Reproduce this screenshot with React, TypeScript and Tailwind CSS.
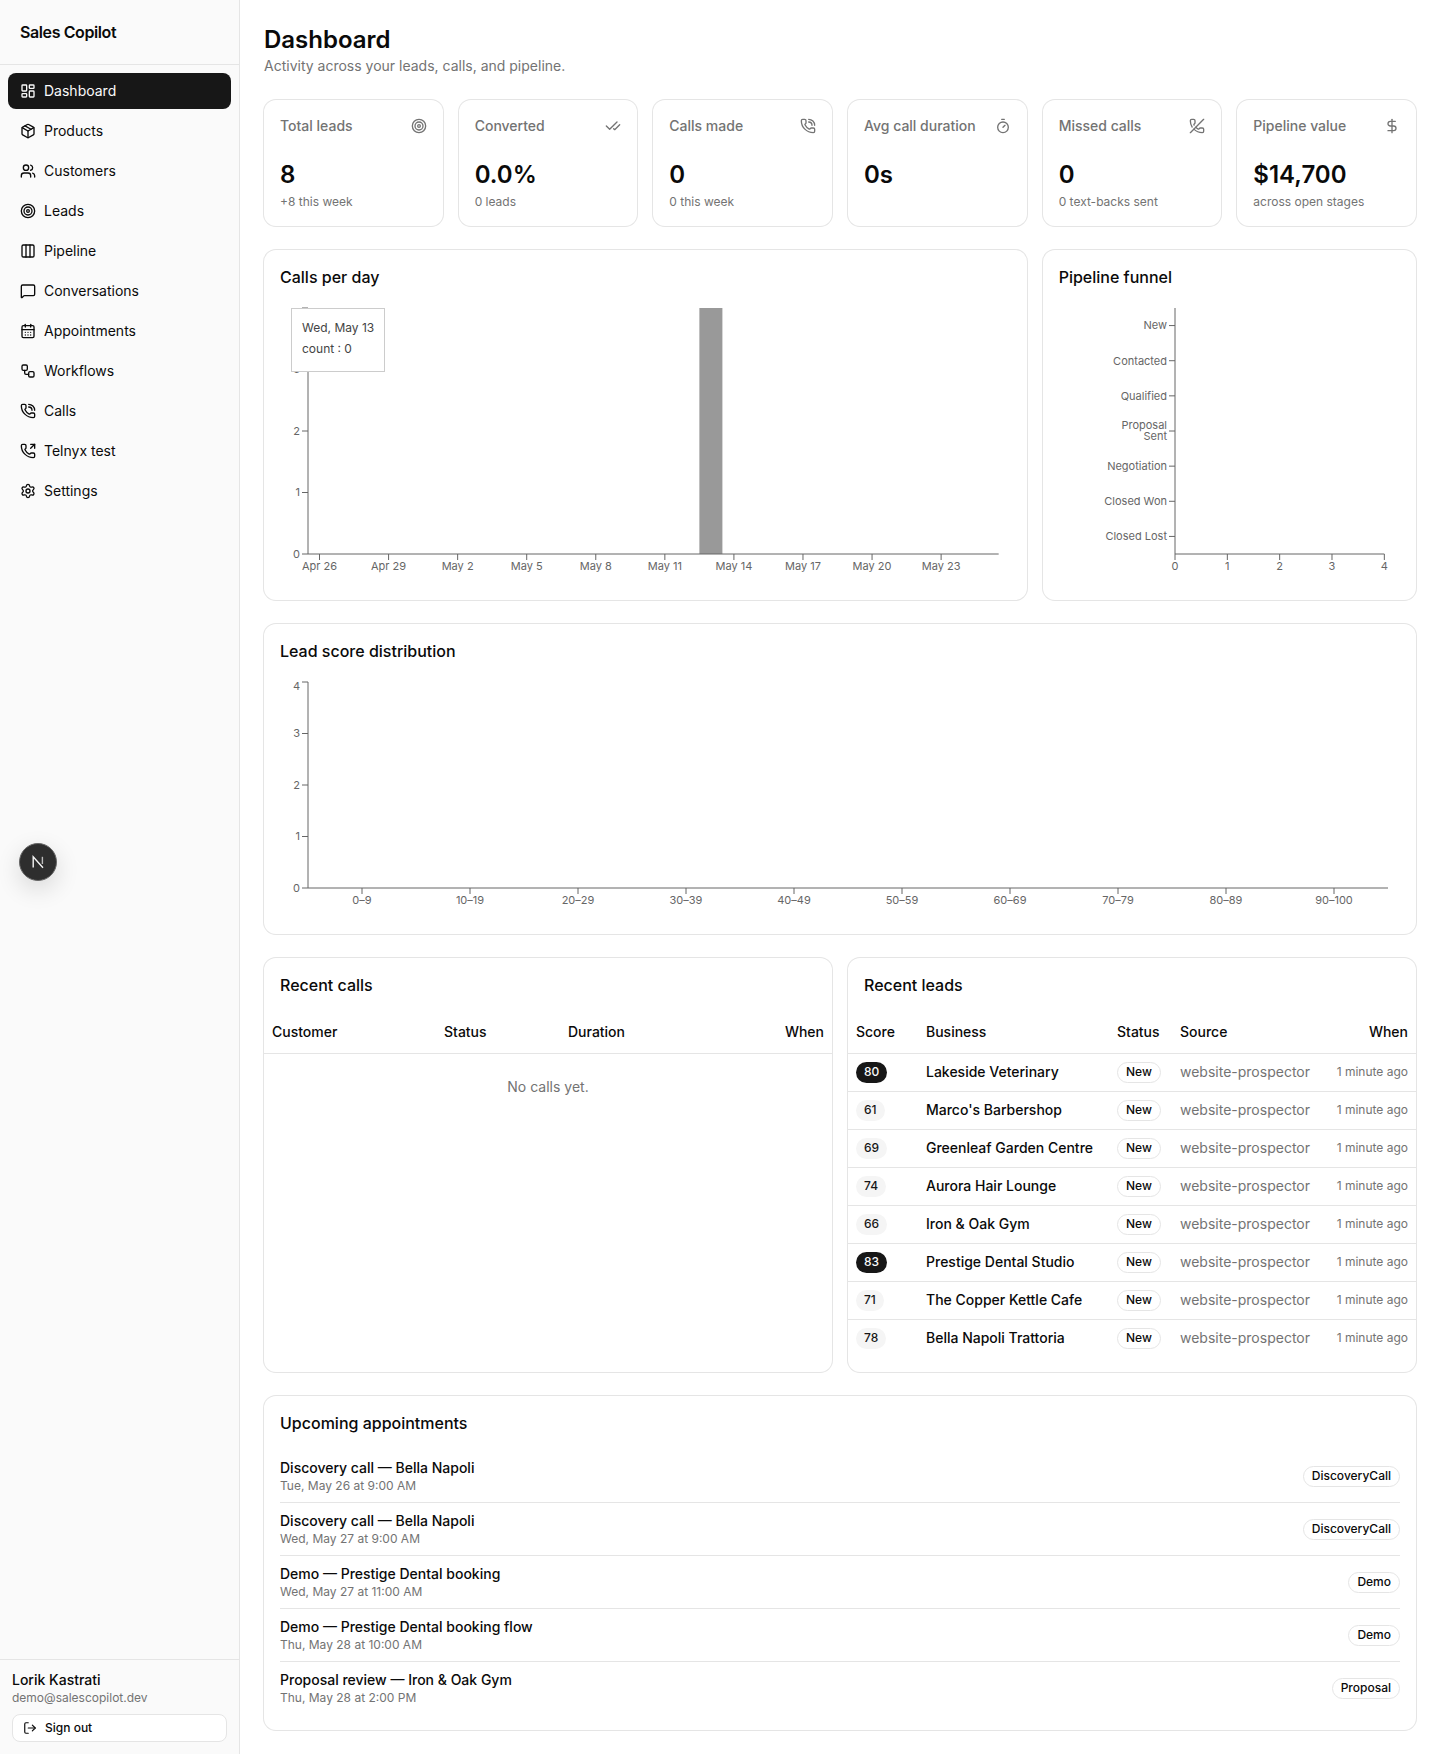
import {
  CalendarDays,
  CheckCheck,
  Columns3,
  DollarSign,
  LayoutDashboard,
  LogOut,
  MessageSquare,
  Package,
  PhoneCall,
  PhoneOff,
  PhoneOutgoing,
  Settings,
  Target,
  Timer,
  Users,
  Workflow,
} from "lucide-react";

const navItems = [
  { name: "Dashboard", icon: LayoutDashboard, active: true },
  { name: "Products", icon: Package },
  { name: "Customers", icon: Users },
  { name: "Leads", icon: Target },
  { name: "Pipeline", icon: Columns3 },
  { name: "Conversations", icon: MessageSquare },
  { name: "Appointments", icon: CalendarDays },
  { name: "Workflows", icon: Workflow },
  { name: "Calls", icon: PhoneCall },
  { name: "Telnyx test", icon: PhoneOutgoing },
  { name: "Settings", icon: Settings },
];

const metrics = [
  { label: "Total leads", value: "8", sub: "+8 this week", icon: Target },
  { label: "Converted", value: "0.0%", sub: "0 leads", icon: CheckCheck },
  { label: "Calls made", value: "0", sub: "0 this week", icon: PhoneCall },
  { label: "Avg call duration", value: "0s", sub: "", icon: Timer },
  { label: "Missed calls", value: "0", sub: "0 text-backs sent", icon: PhoneOff },
  { label: "Pipeline value", value: "$14,700", sub: "across open stages", icon: DollarSign },
];

const leads = [
  { score: 80, name: "Lakeside Veterinary" },
  { score: 61, name: "Marco's Barbershop" },
  { score: 69, name: "Greenleaf Garden Centre" },
  { score: 74, name: "Aurora Hair Lounge" },
  { score: 66, name: "Iron & Oak Gym" },
  { score: 83, name: "Prestige Dental Studio" },
  { score: 71, name: "The Copper Kettle Cafe" },
  { score: 78, name: "Bella Napoli Trattoria" },
];

const appointments = [
  { title: "Discovery call — Bella Napoli", when: "Tue, May 26 at 9:00 AM", type: "DiscoveryCall" },
  { title: "Discovery call — Bella Napoli", when: "Wed, May 27 at 9:00 AM", type: "DiscoveryCall" },
  { title: "Demo — Prestige Dental booking", when: "Wed, May 27 at 11:00 AM", type: "Demo" },
  { title: "Demo — Prestige Dental booking flow", when: "Thu, May 28 at 10:00 AM", type: "Demo" },
  { title: "Proposal review — Iron & Oak Gym", when: "Thu, May 28 at 2:00 PM", type: "Proposal" },
];

const dayLabels = ["Apr 26", "Apr 29", "May 2", "May 5", "May 8", "May 11", "May 14", "May 17", "May 20", "May 23"];
const stages = ["New", "Contacted", "Qualified", "Proposal Sent", "Negotiation", "Closed Won", "Closed Lost"];
const buckets = ["0–9", "10–19", "20–29", "30–39", "40–49", "50–59", "60–69", "70–79", "80–89", "90–100"];

const AXIS = "#666";

function Tick({ x1, y1, x2, y2 }: { x1: number; y1: number; x2: number; y2: number }) {
  return <line x1={x1} y1={y1} x2={x2} y2={y2} stroke={AXIS} />;
}

function CountAxis({ bottom, top, firstDy }: { bottom: number; top: number; firstDy: number }) {
  return (
    <>
      <line x1={28} y1={top} x2={28} y2={bottom} stroke={AXIS} />
      {[0, 1, 2, 3, 4].map((n) => {
        const y = bottom - ((bottom - top) * n) / 4;
        return (
          <g key={n}>
            <Tick x1={22} y1={y} x2={28} y2={y} />
            <text x={20} y={y + (n === 4 ? firstDy : 0)} dy="0.355em" textAnchor="end" fontSize={11} fill={AXIS}>
              {n}
            </text>
          </g>
        );
      })}
    </>
  );
}

function CallsChart() {
  const band = 690.67 / 30;
  return (
    <svg className="block w-full h-[280px] overflow-visible">
      <rect x={28 + band * 17} y={4} width={band} height={246} fill="#999" />
      <CountAxis top={4} bottom={250} firstDy={4} />
      <line x1={28} y1={250} x2={718.67} y2={250} stroke={AXIS} />
      {dayLabels.map((label, i) => {
        const x = 28 + band * (i * 3 + 0.5);
        return (
          <g key={label}>
            <Tick x1={x} y1={250} x2={x} y2={256} />
            <text x={x} y={258} dy="0.71em" textAnchor="middle" fontSize={11} fill={AXIS}>
              {label}
            </text>
          </g>
        );
      })}
    </svg>
  );
}

function FunnelChart() {
  const left = 116;
  const right = 325.33;
  const band = 246 / 7;
  return (
    <svg className="block w-full h-[280px] overflow-visible">
      <line x1={left} y1={4} x2={left} y2={250} stroke={AXIS} />
      <line x1={left} y1={250} x2={right} y2={250} stroke={AXIS} />
      {stages.map((stage, i) => {
        const y = 4 + band * (i + 0.5);
        return (
          <g key={stage}>
            <Tick x1={left - 6} y1={y} x2={left} y2={y} />
            {stage === "Proposal Sent" ? (
              <text textAnchor="end" fontSize={11} fill={AXIS}>
                <tspan x={left - 8} y={y - 6} dy="0.355em">Proposal</tspan>
                <tspan x={left - 8} y={y + 5} dy="0.355em">Sent</tspan>
              </text>
            ) : (
              <text x={left - 8} y={y} dy="0.355em" textAnchor="end" fontSize={11} fill={AXIS}>
                {stage}
              </text>
            )}
          </g>
        );
      })}
      {[0, 1, 2, 3, 4].map((n) => {
        const x = left + ((right - left) * n) / 4;
        return (
          <g key={n}>
            <Tick x1={x} y1={250} x2={x} y2={256} />
            <text x={x} y={258} dy="0.71em" textAnchor="middle" fontSize={11} fill={AXIS}>
              {n}
            </text>
          </g>
        );
      })}
    </svg>
  );
}

function ScoreChart() {
  return (
    <svg className="block w-full h-[240px] overflow-visible">
      <CountAxis top={4} bottom={210} firstDy={4} />
      <line x1={28} y1={210} x2={1108} y2={210} stroke={AXIS} />
      {buckets.map((label, i) => {
        const x = 28 + 108 * (i + 0.5);
        return (
          <g key={label}>
            <Tick x1={x} y1={210} x2={x} y2={216} />
            <text x={x} y={218} dy="0.71em" textAnchor="middle" fontSize={11} fill={AXIS}>
              {label}
            </text>
          </g>
        );
      })}
    </svg>
  );
}

function Card({ className = "", children }: { className?: string; children: React.ReactNode }) {
  return <div className={`rounded-xl bg-white ring-1 ring-[#e5e5e5] ${className}`}>{children}</div>;
}

function CardTitle({ children }: { children: React.ReactNode }) {
  return <h2 className="text-base leading-[22px] font-medium text-[#0a0a0a]">{children}</h2>;
}

function Badge({ children }: { children: React.ReactNode }) {
  return (
    <span className="inline-flex h-[21px] items-center rounded-full border border-[#e5e5e5] bg-white px-2 text-xs font-medium text-[#0a0a0a]">
      {children}
    </span>
  );
}

function Sidebar() {
  return (
    <aside className="flex w-60 shrink-0 flex-col border-r border-[#e5e5e5] bg-[#fafafa]">
      <div className="flex h-[65px] items-center border-b border-[#e5e5e5] px-5">
        <span className="text-base font-semibold tracking-tight text-[#0a0a0a]">Sales Copilot</span>
      </div>
      <nav className="flex flex-1 flex-col gap-1 p-2">
        {navItems.map((item) => {
          const Icon = item.icon;
          return (
            <a
              key={item.name}
              className={`flex h-9 items-center gap-2 rounded-lg px-3 text-sm ${
                item.active ? "bg-[#171717] text-[#fafafa]" : "text-[#0a0a0a]"
              }`}
            >
              <Icon className="h-4 w-4" strokeWidth={2} />
              <span>{item.name}</span>
            </a>
          );
        })}
      </nav>
      <div className="border-t border-[#e5e5e5] px-3 pt-2.5 pb-3">
        <div className="text-sm leading-5 font-medium text-[#0a0a0a]">Lorik Kastrati</div>
        <div className="text-xs leading-4 text-[#737373]">demo@salescopilot.dev</div>
        <button className="mt-2 flex h-7 w-full items-center gap-2 rounded-lg border border-[#e5e5e5] bg-white pr-3 pl-2.5 text-xs font-medium text-[#0a0a0a]">
          <LogOut className="h-3.5 w-3.5" />
          Sign out
        </button>
      </div>
    </aside>
  );
}

export default function App() {
  return (
    <div className="relative flex min-h-screen bg-white font-['Inter',sans-serif] text-[#0a0a0a]">
      <Sidebar />

      <main className="flex min-w-0 flex-1 flex-col gap-6 p-6">
        <div>
          <h1 className="text-2xl leading-8 font-semibold">Dashboard</h1>
          <p className="text-sm leading-5 text-[#737373]">Activity across your leads, calls, and pipeline.</p>
        </div>

        {/* Metric cards */}
        <div className="grid grid-cols-6 gap-4">
          {metrics.map((m) => {
            const Icon = m.icon;
            return (
              <Card key={m.label} className="h-[126px] p-4">
                <div className="flex items-center justify-between">
                  <span className="text-sm leading-5 font-medium text-[#737373]">{m.label}</span>
                  <Icon className="h-4 w-4 text-[#737373]" />
                </div>
                <div className="mt-[23px] text-2xl leading-8 font-semibold">{m.value}</div>
                {m.sub && <div className="mt-[3px] text-xs leading-4 text-[#737373]">{m.sub}</div>}
              </Card>
            );
          })}
        </div>

        {/* Charts */}
        <div className="grid grid-cols-3 gap-4">
          <Card className="relative col-span-2 p-4">
            <CardTitle>Calls per day</CardTitle>
            <div className="mt-4">
              <CallsChart />
            </div>
            <div className="absolute top-[58px] left-[27px] h-[64px] w-[94px] border border-[#ccc] bg-white px-2.5 pt-2 text-xs leading-[21px] whitespace-nowrap text-[#444]">
              <div>Wed, May 13</div>
              <div>count : 0</div>
            </div>
          </Card>
          <Card className="p-4">
            <CardTitle>Pipeline funnel</CardTitle>
            <div className="mt-4">
              <FunnelChart />
            </div>
          </Card>
        </div>

        <Card className="p-4">
          <CardTitle>Lead score distribution</CardTitle>
          <div className="mt-4">
            <ScoreChart />
          </div>
        </Card>

        {/* Tables */}
        <div className="grid grid-cols-2 gap-4">
          <Card className="pt-4">
            <div className="px-4">
              <CardTitle>Recent calls</CardTitle>
            </div>
            <table className="mt-4 w-full table-fixed text-sm">
              <thead>
                <tr className="h-[41px] border-b border-[#e5e5e5]">
                  <th className="w-[172px] px-2 text-left font-medium">Customer</th>
                  <th className="w-[124px] px-2 text-left font-medium">Status</th>
                  <th className="px-2 text-left font-medium">Duration</th>
                  <th className="w-[86px] px-2 text-right font-medium">When</th>
                </tr>
              </thead>
              <tbody>
                <tr>
                  <td colSpan={4} className="h-[68px] text-center text-[#737373]">
                    No calls yet.
                  </td>
                </tr>
              </tbody>
            </table>
          </Card>
          <Card className="py-4">
            <div className="px-4">
              <CardTitle>Recent leads</CardTitle>
            </div>
            <table className="mt-4 w-full table-fixed text-sm">
              <thead>
                <tr className="h-[41px] border-b border-[#e5e5e5]">
                  <th className="w-[70px] px-2 text-left font-medium">Score</th>
                  <th className="w-[191px] px-2 text-left font-medium">Business</th>
                  <th className="w-[63px] px-2 text-left font-medium">Status</th>
                  <th className="w-[150px] px-2 text-left font-medium">Source</th>
                  <th className="px-2 text-right font-medium">When</th>
                </tr>
              </thead>
              <tbody>
                {leads.map((lead) => (
                  <tr key={lead.name} className="h-[38px] border-b border-[#e5e5e5] last:h-[37px] last:border-b-0">
                    <td className="px-2">
                      <span
                        className={`inline-flex h-[21px] items-center rounded-full px-2 text-xs font-medium ${
                          lead.score >= 80 ? "bg-[#171717] text-[#fafafa]" : "bg-[#f5f5f5] text-[#171717]"
                        }`}
                      >
                        {lead.score}
                      </span>
                    </td>
                    <td className="px-2 font-medium whitespace-nowrap">{lead.name}</td>
                    <td className="px-2">
                      <Badge>New</Badge>
                    </td>
                    <td className="px-2 text-[#737373]">website-prospector</td>
                    <td className="px-2 text-right text-xs whitespace-nowrap text-[#737373]">1 minute ago</td>
                  </tr>
                ))}
              </tbody>
            </table>
          </Card>
        </div>

        {/* Appointments */}
        <Card className="p-4">
          <CardTitle>Upcoming appointments</CardTitle>
          <div className="mt-4 flex flex-col">
            {appointments.map((a, i) => (
              <div
                key={a.when}
                className={`flex items-center justify-between py-2 ${
                  i < appointments.length - 1 ? "border-b border-[#e5e5e5]" : ""
                }`}
              >
                <div>
                  <div className="text-sm leading-5 font-medium">{a.title}</div>
                  <div className="text-xs leading-4 text-[#737373]">{a.when}</div>
                </div>
                <Badge>{a.type}</Badge>
              </div>
            ))}
          </div>
        </Card>
      </main>

      {/* Next.js dev indicator */}
      <div className="absolute top-[843px] left-[19px] flex h-[38px] w-[38px] items-center justify-center rounded-full border border-[#666] bg-[#2e2e2e] shadow-[0_8px_24px_rgba(0,0,0,0.14)]">
        <svg width="14" height="14" viewBox="0 0 14 14" fill="none">
          <path d="M2.2 12.5V1.8L12 12.8" stroke="#f5f5f5" strokeWidth="1.4" />
          <path d="M11.4 1.8V9" stroke="#bbb" strokeWidth="1.4" />
        </svg>
      </div>
    </div>
  );
}
